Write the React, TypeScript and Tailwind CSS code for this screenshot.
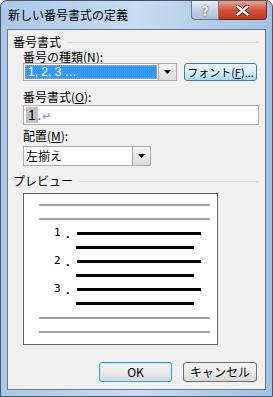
import React from "react";

const FONT = "font-['Noto_Sans_CJK_JP','Noto_Sans',sans-serif]";

function Arrow() {
  return (
    <div className="flex h-full w-[18px] items-center justify-center border-l border-[#a0a0a0] bg-gradient-to-b from-[#f4f4f4] to-[#dcdcdc]">
      <svg width="7" height="4" viewBox="0 0 7 4">
        <path d="M0 0h7L3.5 4z" fill="#000" />
      </svg>
    </div>
  );
}

function SectionTitle({ children }: { children: React.ReactNode }) {
  return (
    <div className="flex h-[14px] items-center pl-[5px] pr-[7px]">
      <span className="text-[12px] leading-[14px] text-black">{children}</span>
      <div className="ml-[6px] h-px flex-1 bg-[#d5dfe5]" />
    </div>
  );
}

function Label({ children }: { children: React.ReactNode }) {
  return (
    <div className="h-[14px] pl-[15px] text-[12px] leading-[14px] text-black">{children}</div>
  );
}

function PreviewItem({ n }: { n: number }) {
  return (
    <div className="flex flex-col">
      <div className="flex h-[14px] items-center">
        <span className="w-[22px] pl-[15px] font-['DejaVu_Sans_Mono',monospace] text-[11px] leading-[14px]">
          {n}
        </span>
        <span className="w-[16px] pl-[5px] text-[11px] font-bold leading-[14px]">.</span>
        <div className="h-[3px] w-[124px] bg-black" />
      </div>
      <div className="flex h-[14px] items-center pl-[37px]">
        <div className="h-[3px] w-[118px] bg-black" />
      </div>
    </div>
  );
}

export default function App() {
  return (
    <div
      className={`${FONT} relative flex h-[397px] w-[273px] flex-col overflow-hidden rounded-t-[7px] border border-[#4a5566] bg-gradient-to-r from-[#a9c8ea] via-[#c9dcf0] to-[#9fc2e8]`}
    >
      {/* title bar */}
      <div className="flex h-[28px] items-start justify-between">
        <span className="mt-[6px] pl-[7px] text-[12px] leading-[16px] text-black">
          新しい番号書式の定義
        </span>
        <div className="mr-[5px] flex h-[19px]">
          <div className="flex w-[28px] items-center justify-center rounded-bl-[4px] border border-t-0 border-[#6d7a8a] bg-gradient-to-b from-[#e6eef7] via-[#c4d3e3] to-[#aebfd2] text-[13px] font-bold leading-none text-white [text-shadow:0_0_2px_#333]">
            ?
          </div>
          <div className="flex w-[48px] items-center justify-center rounded-br-[4px] border border-l-0 border-t-0 border-[#6b2a22] bg-gradient-to-b from-[#e8a797] via-[#d2533b] to-[#c1361d]">
            <svg width="13" height="11" viewBox="0 0 13 11">
              <path
                d="M1.5 1.5l10 8M11.5 1.5l-10 8"
                stroke="#3a1010"
                strokeWidth="4"
                strokeLinecap="round"
              />
              <path
                d="M1.5 1.5l10 8M11.5 1.5l-10 8"
                stroke="#fff"
                strokeWidth="2.4"
                strokeLinecap="round"
              />
            </svg>
          </div>
        </div>
      </div>

      {/* client */}
      <div className="mx-[6px] flex h-[361px] flex-col border border-[#6b7a8c] bg-[#f0f0f0] pt-[5px]">
        <SectionTitle>番号書式</SectionTitle>
        <div className="mt-px h-[13px]">
          <Label>
            番号の種類(<span className="underline">N</span>):
          </Label>
        </div>
        <div className="flex h-[18px] items-stretch pl-[15px]">
          <div className="flex w-[154px] border border-[#a5acb5] bg-white">
            <div className="m-px flex flex-1 items-center border border-dotted border-[#e8a33c] bg-[#3399ff] pl-[2px] font-['Liberation_Sans',sans-serif] text-[12px] leading-none text-white">
              1, 2, 3 …
            </div>
            <Arrow />
          </div>
          <div className="ml-[7px] flex w-[73px] items-center justify-center rounded-[3px] border border-[#3c7fb1] bg-gradient-to-b from-[#eaf6fd] via-[#d9f0fc] to-[#a7d9f5] text-[11px] leading-none text-black">
            フォント(<span className="underline">F</span>)...
          </div>
        </div>

        <div className="mt-[9px]">
          <Label>
            番号書式(<span className="underline">O</span>):
          </Label>
        </div>
        <div className="mt-px pl-[15px] pr-[6px]">
          <div className="flex h-[20px] items-center border border-[#abadb3] bg-white pl-[2px]">
            <span className="bg-[#c0c0c0] px-[2px] font-['Liberation_Sans',sans-serif] text-[14px] leading-[16px]">
              1
            </span>
            <span className="text-[12px] leading-none text-[#1a4fa0]">.</span>
            <span className="ml-px text-[11px] leading-none text-[#7a8aa0]">↵</span>
          </div>
        </div>

        <div className="mt-[4px]">
          <Label>
            配置(<span className="underline">M</span>):
          </Label>
        </div>
        <div className="mt-[3px] pl-[15px]">
          <div className="flex h-[20px] w-[128px] border border-[#a5acb5] bg-white">
            <div className="flex flex-1 items-center pl-[2px] text-[12px] leading-none">左揃え</div>
            <Arrow />
          </div>
        </div>

        <div className="mt-[8px]">
          <SectionTitle>プレビュー</SectionTitle>
        </div>
        <div className="mt-[5px] pl-[15px]">
          <div className="flex h-[152px] w-[195px] flex-col border border-[#646464] bg-white pl-[15px] pt-[10px]">
            <div className="h-[2px] w-[171px] bg-[#a0a0a0]" />
            <div className="mt-[12px] h-[2px] w-[171px] bg-[#a0a0a0]" />
            <div className="mt-[6px] flex flex-col">
              <PreviewItem n={1} />
              <PreviewItem n={2} />
              <PreviewItem n={3} />
            </div>
            <div className="mt-[7px] h-[2px] w-[171px] bg-[#a0a0a0]" />
            <div className="mt-[12px] h-[2px] w-[171px] bg-[#a0a0a0]" />
          </div>
        </div>

        <div className="mt-[17px] flex justify-end gap-[11px] pr-[8px]">
          <div className="flex h-[20px] w-[73px] items-center justify-center rounded-[3px] border border-[#3399ff] bg-gradient-to-b from-[#f2f2f2] via-[#ebebeb] to-[#d6d6d6] text-[12px] leading-none shadow-[inset_0_0_0_1px_#c6e8fa]">
            OK
          </div>
          <div className="flex h-[20px] w-[74px] items-center justify-center rounded-[3px] border border-[#707070] bg-gradient-to-b from-[#f2f2f2] via-[#ebebeb] to-[#d6d6d6] text-[12px] leading-none">
            キャンセル
          </div>
        </div>
      </div>
    </div>
  );
}
